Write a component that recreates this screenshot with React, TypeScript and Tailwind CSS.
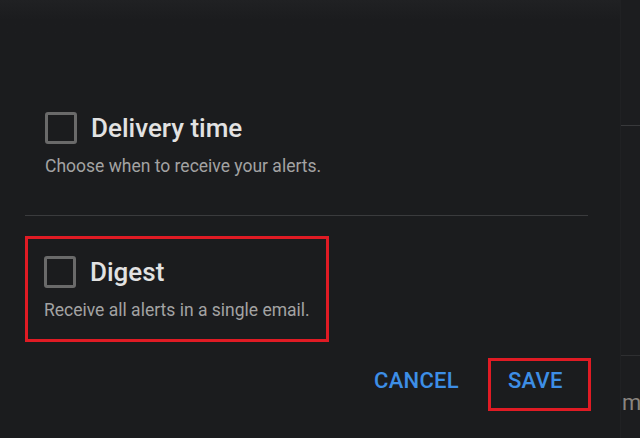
import React from "react";

function Box() {
  return <div className="w-[32px] h-[32px] shrink-0 rounded-[3px] border-[3px] border-[#6a6a6a]" />;
}

export default function App() {
  return (
    <div
      className="w-[640px] h-[438px] flex bg-[#1b1c1e] overflow-hidden"
      style={{ fontFamily: "Roboto, 'Liberation Sans', sans-serif" }}
    >
      <div className="w-[620px] h-full flex flex-col pl-[25px] pr-[32px] bg-gradient-to-b from-[#202123] via-[#1b1c1e] to-[#1b1c1e] bg-no-repeat [background-size:100%_40px] bg-[#1b1c1e]">
        <div className="pl-[20px] pt-[112px]">
          <div className="flex items-center gap-[14px]">
            <Box />
            <span className="text-[26px] leading-[32px] font-medium text-[#e2e2e2]">Delivery time</span>
          </div>
          <p className="mt-[12px] text-[17.5px] leading-[20px] text-[#a3a3a3]">Choose when to receive your alerts.</p>
        </div>
        <div className="mt-[39px] h-px bg-[#3a3b3d]" />
        <div className="mt-[20px] w-[304px] border-[3px] border-[#e01b24] pl-[16px] pt-[17px] pb-[19px]">
          <div className="flex items-center gap-[14px]">
            <Box />
            <span className="text-[26px] leading-[32px] font-medium text-[#e2e2e2]">Digest</span>
          </div>
          <p className="mt-[12px] text-[17.5px] leading-[20px] text-[#a3a3a3]">Receive all alerts in a single email.</p>
        </div>
        <div className="mt-[16px] flex justify-end items-center mr-[-3px]">
          <span className="text-[22px] font-medium tracking-[0.3px] text-[#3d8ee6] mr-[29px] mb-[8px]">CANCEL</span>
          <div className="w-[103px] h-[53px] border-[3px] border-[#e01b24] flex items-center pl-[17px] pb-[8px]">
            <span className="text-[22px] font-medium tracking-[0.3px] text-[#3d8ee6]">SAVE</span>
          </div>
        </div>
      </div>
      <div className="w-[20px] h-full flex flex-col border-l border-[#202123] bg-[#1c1d1f]">
        <div className="h-[125px]" />
        <div className="h-px bg-[#38393b]" />
        <div className="h-[229px]" />
        <div className="h-px bg-[#2e2f31]" />
        <div className="mt-[35px] text-[22px] leading-[24px] text-[#8a8580] pl-[1px]">m</div>
      </div>
    </div>
  );
}
